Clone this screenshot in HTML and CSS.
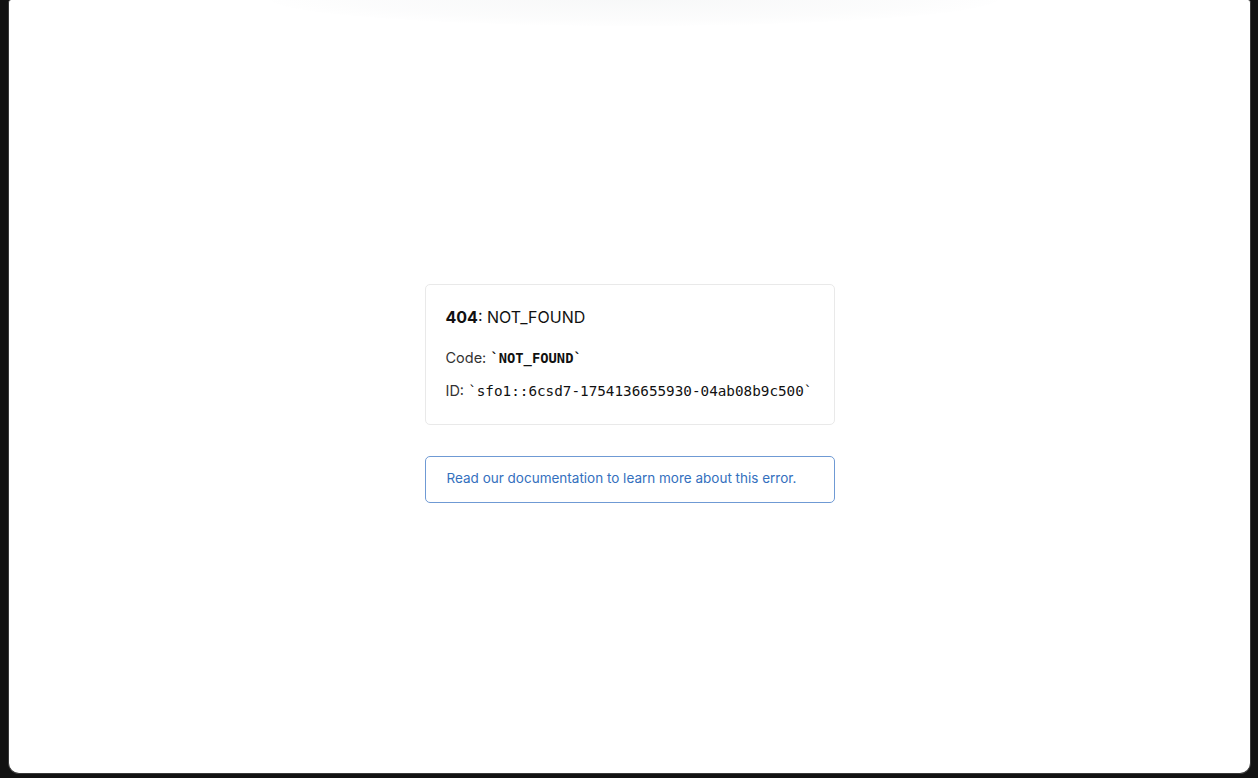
FILE: index.html
```html
<!DOCTYPE html>
<html lang="en">
<head>
<meta charset="utf-8">
<title>404: NOT_FOUND</title>
<link rel="stylesheet" href="styles.css">
</head>
<body>
<div class="window">
  <div class="glow"></div>
  <main class="content">
    <div class="card">
      <h1 class="title"><strong>404</strong>: NOT_FOUND</h1>
      <p class="row">Code: <code class="code-strong">`NOT_FOUND`</code></p>
      <p class="row row-id">ID: <code class="code">`sfo1::6csd7-1754136655930-04ab08b9c500`</code></p>
    </div>
    <a class="doc-link" href="#">Read our documentation to learn more about this error.</a>
  </main>
</div>
</body>
</html>
```
FILE: styles.css
```css
html, body {
  margin: 0;
  padding: 0;
  height: 100%;
}
body {
  background: #121212;
  font-family: Inter, "Liberation Sans", Arial, sans-serif;
  overflow: hidden;
}
.window {
  position: relative;
  margin: 0 7px 0 8px;
  height: 774px;
  background: #ffffff;
  border: 1px solid #3a3a3a;
  border-top: none;
  border-radius: 3px 3px 11px 11px;
  overflow: hidden;
  box-sizing: border-box;
}
.glow {
  position: absolute;
  top: -30px;
  left: 260px;
  width: 730px;
  height: 56px;
  border-radius: 50%;
  background: radial-gradient(ellipse at center, rgba(120,130,140,0.06) 0%, rgba(120,130,140,0.025) 55%, rgba(255,255,255,0) 75%);
}
.content {
  height: 100%;
  display: flex;
  flex-direction: column;
  align-items: center;
  justify-content: center;
  padding-top: 14px;
  box-sizing: border-box;
}
.card {
  width: 410px;
  box-sizing: border-box;
  border: 1px solid #e9e9e9;
  border-radius: 5px;
  padding: 20px 20px 23px 20px;
  color: #1a1a1a;
}
.title {
  margin: 0 0 19px 0;
  font-size: 16px;
  line-height: 24px;
  font-weight: 400;
  color: #111;
}
.title strong {
  font-weight: 700;
}
.row {
  margin: 0;
  font-size: 14.5px;
  line-height: 20px;
  color: #333;
  white-space: nowrap;
}
.row-id {
  margin-top: 13px;
}
.code, .code-strong {
  font-family: "DejaVu Sans Mono", "Liberation Mono", monospace;
  font-size: 14.3px;
  color: #111;
}
.code-strong {
  font-weight: 700;
  font-size: 13.8px;
}
.doc-link {
  display: block;
  width: 410px;
  box-sizing: border-box;
  margin-top: 31px;
  padding: 12px 21px 15px;
  border: 1px solid #6f9ad4;
  border-radius: 5px;
  font-size: 13.5px;
  line-height: 18px;
  color: #3470be;
  text-decoration: none;
}
```
